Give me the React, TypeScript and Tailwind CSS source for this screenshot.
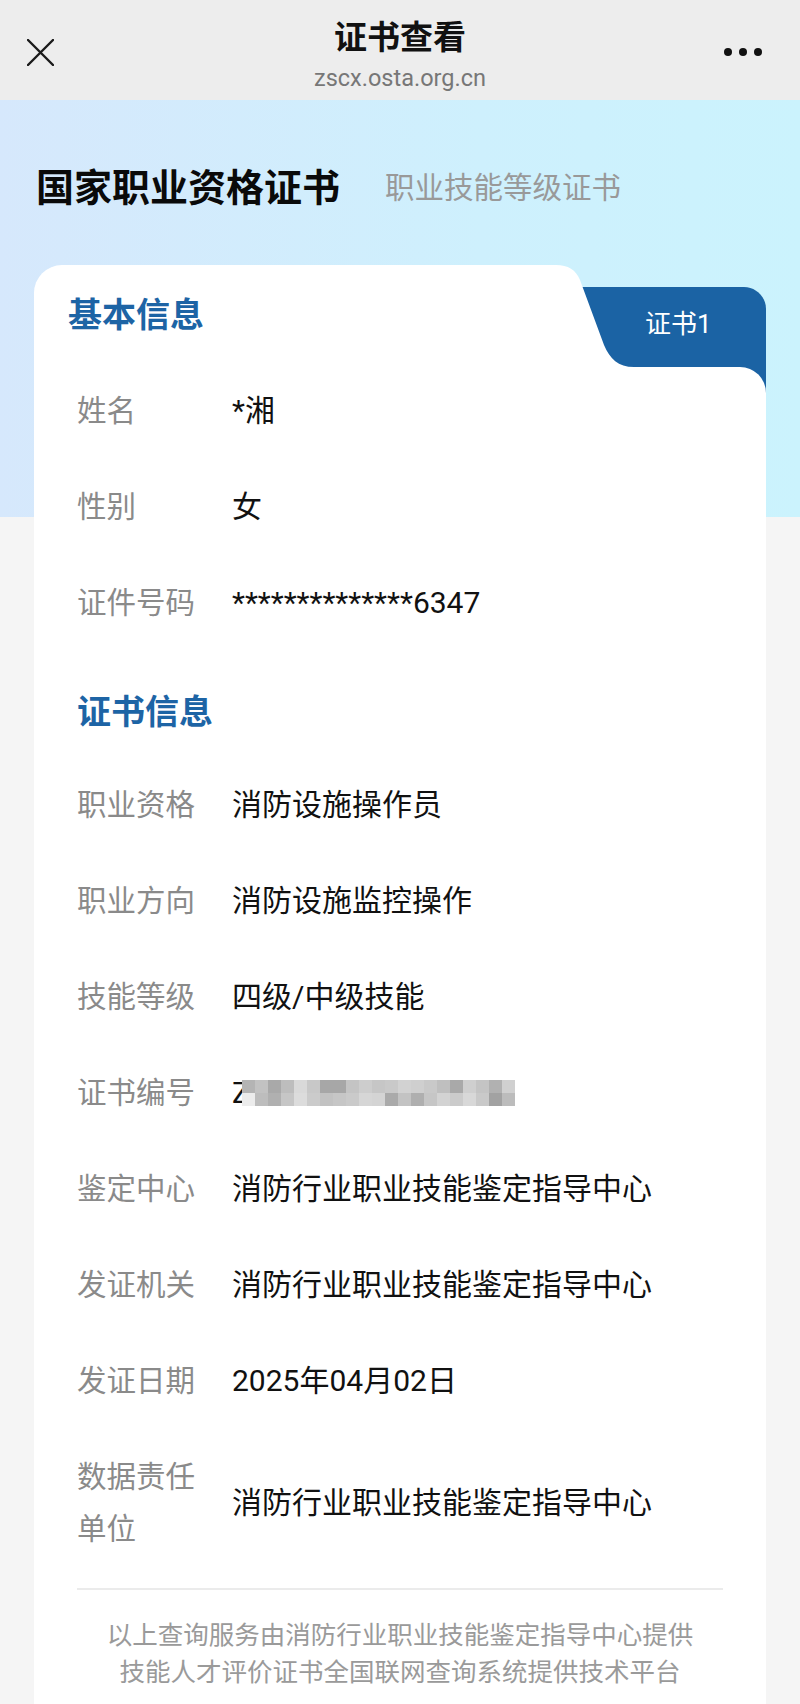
import React from "react";

const FONT = { fontFamily: 'Roboto, "Noto Sans CJK SC", sans-serif' };

// 打码条的灰块（两行）
const BLUR_TOP = ["#b4b4b4", "#c2c2c2", "#a9a9a9", "#bdbdbd", "#d9d9d9", "#c8c8c8", "#a7a7a7", "#a7a7a7", "#c4c4c4", "#cdcdcd", "#c6c6c6", "#c9c9c9", "#d2d2d2", "#cfcfcf", "#c9c9c9", "#bfbfbf", "#a9a9a9", "#cfcfcf", "#c4c4c4", "#b1b1b1", "#d0d0d0"];
const BLUR_BOTTOM = ["#ececec", "#bdbdbd", "#b0b0b0", "#c6c6c6", "#dcdcdc", "#cbcbcb", "#c2c2c2", "#c6c6c6", "#cacaca", "#d6d6d6", "#d4d4d4", "#aaaaaa", "#c3c3c3", "#afafaf", "#c6c6c6", "#d3d3d3", "#cbcbcb", "#d8d8d8", "#c9c9c9", "#a2a2a2", "#bcbcbc"];

const basicRows = [
  { label: "姓名", value: "*湘" },
  { label: "性别", value: "女" },
  { label: "证件号码", value: "**************6347" },
];

const certRows = [
  { label: "职业资格", value: "消防设施操作员" },
  { label: "职业方向", value: "消防设施监控操作" },
  { label: "技能等级", value: "四级/中级技能" },
  { label: "证书编号", value: "" },
  { label: "鉴定中心", value: "消防行业职业技能鉴定指导中心" },
  { label: "发证机关", value: "消防行业职业技能鉴定指导中心" },
  { label: "发证日期", value: "2025年04月02日" },
  { label: "数据责任单位", value: "消防行业职业技能鉴定指导中心" },
];

const BlurredNumber = () => (
  <div className="flex items-center">
    <span className="text-[#111]">Z</span>
    <div className="-ml-[8px] flex flex-col">
      <div className="flex">
        {BLUR_TOP.map((c, i) => (
          <div key={i} className="h-[13px] w-[13px]" style={{ backgroundColor: c }} />
        ))}
      </div>
      <div className="flex">
        {BLUR_BOTTOM.map((c, i) => (
          <div key={i} className="h-[13px] w-[13px]" style={{ backgroundColor: c }} />
        ))}
      </div>
    </div>
  </div>
);

const Row = ({ label, value }: { label: string; value: string }) => (
  <div className="flex items-center leading-[52px]">
    <div className="w-[120px] shrink-0 text-[29.5px] text-[#8a8a8a]">{label}</div>
    <div className="ml-[35px] text-[30px] text-[#111]">
      {label === "证书编号" ? <BlurredNumber /> : value}
    </div>
  </div>
);

export default function App() {
  return (
    <div className="min-h-[1704px] w-[800px] overflow-hidden bg-[#f5f5f5]" style={FONT}>
      {/* top bar */}
      <div className="grid h-[100px] grid-cols-[1fr_auto_1fr] bg-[#ededed]">
        <div className="flex items-start pl-[27px] pt-[39px]">
          <svg width="27" height="27" viewBox="0 0 27 27">
            <path d="M1 1 L26 26 M26 1 L1 26" stroke="#1a1a1a" strokeWidth="2.4" strokeLinecap="round" />
          </svg>
        </div>
        <div className="flex flex-col items-center pt-[18px]">
          <div className="text-[33px] font-semibold leading-[40px] text-[#111]">证书查看</div>
          <div className="mt-[7px] text-[23.5px] leading-[26px] text-[#777]">zscx.osta.org.cn</div>
        </div>
        <div className="flex items-start justify-end gap-[7px] pr-[38px] pt-[48px]">
          <span className="h-[8px] w-[8px] rounded-full bg-[#111]" />
          <span className="h-[8px] w-[8px] rounded-full bg-[#111]" />
          <span className="h-[8px] w-[8px] rounded-full bg-[#111]" />
        </div>
      </div>

      <div className="bg-[linear-gradient(to_right,#d6e8fc,#cef0fd_60%,#cbf3fd)] bg-[length:100%_417px] bg-no-repeat">
        {/* title row */}
        <div className="flex items-center px-[36px] pt-[64px]">
          <div className="text-[38px] font-bold leading-[48px] text-[#0a0a0a]">国家职业资格证书</div>
          <div className="ml-[45px] text-[29.5px] leading-[48px] text-[#999]">职业技能等级证书</div>
        </div>

        {/* card */}
        <div className="mx-[34px] mt-[53px]">
          <div className="flex h-[102px]">
            <div className="flex-1 rounded-tl-[28px] bg-white pl-[34px] pt-[28px]">
              <div className="text-[34px] font-bold leading-[44px] text-[#1d64a5]">基本信息</div>
            </div>
            <div className="relative h-[102px] w-[226px]">
              <svg className="absolute inset-0" width="226" height="102" viewBox="0 0 226 102">
                <path d="M30 22 H204 C216 22 226 32 226 44 V102 H30 Z" fill="#1b63a4" />
                <path d="M0 0 H16 C28 0 36 5 40 15 L64 80 C70 94 78 102 94 102 H0 Z" fill="#ffffff" />
              </svg>
              <span className="absolute left-[105px] top-[43px] text-[26px] leading-[32px] text-white">证书1</span>
            </div>
          </div>

          <div className="bg-[#1b63a4]">
            <div className="rounded-tr-[26px] bg-white px-[43px] pb-[13px] pt-[18px]">
              <div className="flex flex-col gap-[44px]">
                {basicRows.map((r) => (
                  <Row key={r.label} {...r} />
                ))}
              </div>

              <div className="mt-[57px] text-[34px] font-bold leading-[52px] text-[#1d64a5]">证书信息</div>

              <div className="mt-[41px] flex flex-col gap-[44px]">
                {certRows.map((r) => (
                  <Row key={r.label} {...r} />
                ))}
              </div>

              <div className="mt-[33px] h-[2px] bg-[#ebebeb]" />

              <div className="mt-[27px] text-center text-[25.5px] leading-[37px] text-[#9a9a9a]">
                <p>以上查询服务由消防行业职业技能鉴定指导中心提供</p>
                <p>技能人才评价证书全国联网查询系统提供技术平台</p>
              </div>
            </div>
          </div>
        </div>
      </div>
    </div>
  );
}
